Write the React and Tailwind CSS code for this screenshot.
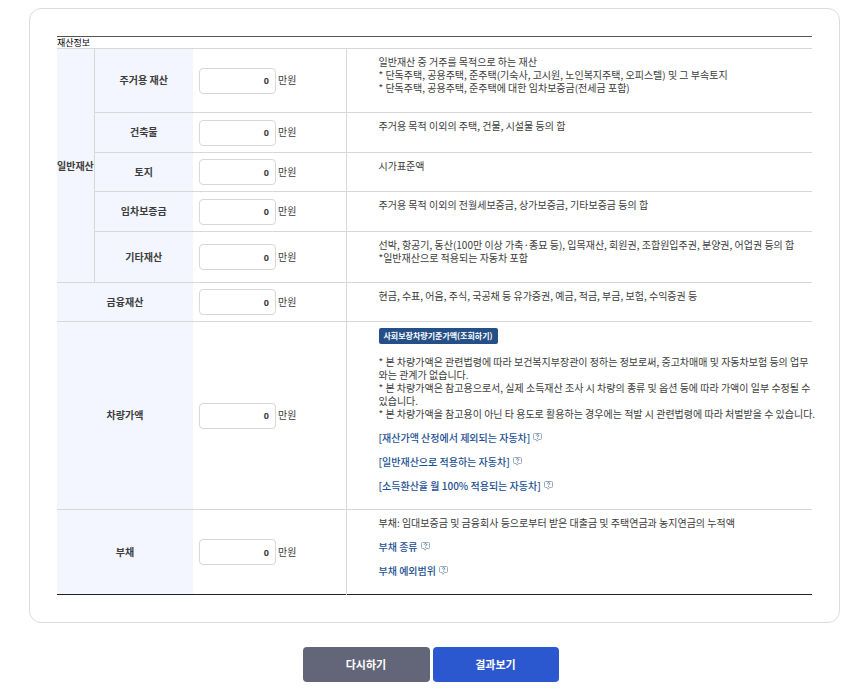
import React, { useState } from "react";

const generalAssets = [
  {
    id: "house",
    label: "주거용 재산",
    lines: [
      "일반재산 중 거주를 목적으로 하는 재산",
      "* 단독주택, 공용주택, 준주택(기숙사, 고시원, 노인복지주택, 오피스텔) 및 그 부속토지",
      "* 단독주택, 공용주택, 준주택에 대한 임차보증금(전세금 포함)",
    ],
    height: "h-16",
  },
  {
    id: "building",
    label: "건축물",
    lines: ["주거용 목적 이외의 주택, 건물, 시설물 등의 합"],
    height: "h-10",
  },
  { id: "land", label: "토지", lines: ["시가표준액"] },
  {
    id: "deposit",
    label: "임차보증금",
    lines: ["주거용 목적 이외의 전월세보증금, 상가보증금, 기타보증금 등의 합"],
    height: "h-10",
  },
  {
    id: "etc",
    label: "기타재산",
    lines: [
      "선박, 항공기, 동산(100만 이상 가축·종묘 등), 입목재산, 회원권, 조합원입주권, 분양권, 어업권 등의 합",
      "*일반재산으로 적용되는 자동차 포함",
    ],
    height: "h-[51px]",
  },
];

const carNotes = [
  "* 본 차량가액은 관련법령에 따라 보건복지부장관이 정하는 정보로써, 중고차매매 및 자동차보험 등의 업무",
  "와는 관계가 없습니다.",
  "* 본 차량가액은 참고용으로서, 실제 소득재산 조사 시 차량의 종류 및 옵션 등에 따라 가액이 일부 수정될 수",
  "있습니다.",
  "* 본 차량가액을 참고용이 아닌 타 용도로 활용하는 경우에는 적발 시 관련법령에 따라 처벌받을 수 있습니다.",
];

const carLinks = [
  "[재산가액 산정에서 제외되는 자동차]",
  "[일반재산으로 적용하는 자동차]",
  "[소득환산율 월 100% 적용되는 자동차]",
];

const debtLinks = ["부채 종류", "부채 예외범위"];

const emptyForm = {
  house: "0",
  building: "0",
  land: "0",
  deposit: "0",
  etc: "0",
  finance: "0",
  car: "0",
  debt: "0",
};

const HelpIcon = () => (
  <svg width="9" height="9" viewBox="0 0 9 9" fill="none" aria-hidden="true">
    <path
      d="M1.5 .5h6a1 1 0 0 1 1 1v4a1 1 0 0 1-1 1H5.4L4.2 8.3 3.2 6.5H1.5a1 1 0 0 1-1-1v-4a1 1 0 0 1 1-1z"
      stroke="#9a9fa4"
      strokeWidth=".9"
    />
    <path
      d="M3.3 2.5c.2-1.2 2.4-1.1 2.4.1 0 .8-1.1.7-1.1 1.6M4.6 4.9v.8"
      stroke="#2478c8"
      strokeWidth="1"
    />
  </svg>
);

const HelpLink = ({ text }) => (
  <a
    href="#help"
    className="flex w-fit items-center gap-[3px] whitespace-nowrap font-medium text-[#1b4f93]"
  >
    {text}
    <HelpIcon />
  </a>
);

const Lines = ({ lines }) => (
  <div>
    {lines.map((line) => (
      <p key={line} className="whitespace-nowrap">
        {line}
      </p>
    ))}
  </div>
);

const AssetCells = ({ id, label, colSpan, value, onChange, children }) => (
  <>
    <th
      scope="row"
      colSpan={colSpan}
      className="bg-[#f3f6fe] pb-0.5 text-center font-bold"
    >
      <label htmlFor={id}>{label}</label>
    </th>
    <td className="border-r border-[#d8d8d8] px-1.5 py-1.5">
      <div className="flex items-center gap-0.5">
        <input
          id={id}
          type="text"
          inputMode="numeric"
          value={value}
          onChange={(e) => onChange(id, e.target.value)}
          className="h-[26px] w-[77px] rounded border border-[#d8d8d8] bg-white px-1.5 text-right font-['Noto_Sans'] text-[9px] font-bold"
        />
        <span className="pb-0.5">만원</span>
      </div>
    </td>
    <td className="pt-1.5 pb-[17px] pl-8 align-top">
      <div className="flex flex-col items-start gap-[11px]">{children}</div>
    </td>
  </>
);

const App = () => {
  const [form, setForm] = useState(emptyForm);

  const handleChange = (id, value) => setForm({ ...form, [id]: value });

  return (
    <form
      onSubmit={(e) => e.preventDefault()}
      onReset={() => setForm(emptyForm)}
      className="bg-white pt-2 pr-[15px] pb-2 pl-[29px] font-['Noto_Sans_CJK_KR',sans-serif] text-[10px] leading-[13px] text-[#3c3c3c]"
    >
      <div className="rounded-xl border border-[#dcdcdc] px-[27px] py-[27px]">
        <table className="w-full table-fixed border-collapse border-t border-[#555]">
          <colgroup>
            <col className="w-[37px]" />
            <col className="w-[99px]" />
            <col className="w-[153px]" />
            <col />
          </colgroup>
          <thead>
            <tr className="border-b border-[#d8d8d8]">
              <th
                colSpan={4}
                className="text-left text-[9px] leading-[11px] font-normal text-black"
              >
                재산정보
              </th>
            </tr>
          </thead>
          <tbody>
            {generalAssets.map((asset, index) => (
              <tr
                key={asset.id}
                className={`border-b border-[#d8d8d8] ${asset.height || ""}`}
              >
                {index === 0 && (
                  <th
                    scope="rowgroup"
                    rowSpan={generalAssets.length}
                    className="border-r border-[#d8d8d8] bg-[#f3f6fe] text-center font-bold whitespace-nowrap"
                  >
                    일반재산
                  </th>
                )}
                <AssetCells
                  id={asset.id}
                  label={asset.label}
                  value={form[asset.id]}
                  onChange={handleChange}
                >
                  <Lines lines={asset.lines} />
                </AssetCells>
              </tr>
            ))}
            <tr className="border-y border-[#d8d8d8]">
              <AssetCells
                id="finance"
                label="금융재산"
                colSpan={2}
                value={form.finance}
                onChange={handleChange}
              >
                <Lines
                  lines={[
                    "현금, 수표, 어음, 주식, 국공채 등 유가증권, 예금, 적금, 부금, 보험, 수익증권 등",
                  ]}
                />
              </AssetCells>
            </tr>
            <tr className="border-b border-[#d8d8d8]">
              <AssetCells
                id="car"
                label="차량가액"
                colSpan={2}
                value={form.car}
                onChange={handleChange}
              >
                <button
                  type="button"
                  className="h-4 rounded-xs bg-[#255087] px-[5px] text-[8px] leading-4 font-bold whitespace-nowrap text-white"
                >
                  사회보장차량기준가액(조회하기)
                </button>
                <Lines lines={carNotes} />
                {carLinks.map((text) => (
                  <HelpLink key={text} text={text} />
                ))}
              </AssetCells>
            </tr>
            <tr className="border-b border-[#222]">
              <AssetCells
                id="debt"
                label="부채"
                colSpan={2}
                value={form.debt}
                onChange={handleChange}
              >
                <Lines
                  lines={[
                    "부채: 임대보증금 및 금융회사 등으로부터 받은 대출금 및 주택연금과 농지연금의 누적액",
                  ]}
                />
                {debtLinks.map((text) => (
                  <HelpLink key={text} text={text} />
                ))}
              </AssetCells>
            </tr>
          </tbody>
        </table>
      </div>

      <div className="mt-6 flex justify-center gap-[3px] pr-2 text-[11px] font-bold text-white">
        <button type="reset" className="h-[35px] w-[127px] rounded bg-[#636678]">
          다시하기
        </button>
        <button type="submit" className="h-[35px] w-[126px] rounded bg-[#2b57cf]">
          결과보기
        </button>
      </div>
    </form>
  );
};

export default App;
